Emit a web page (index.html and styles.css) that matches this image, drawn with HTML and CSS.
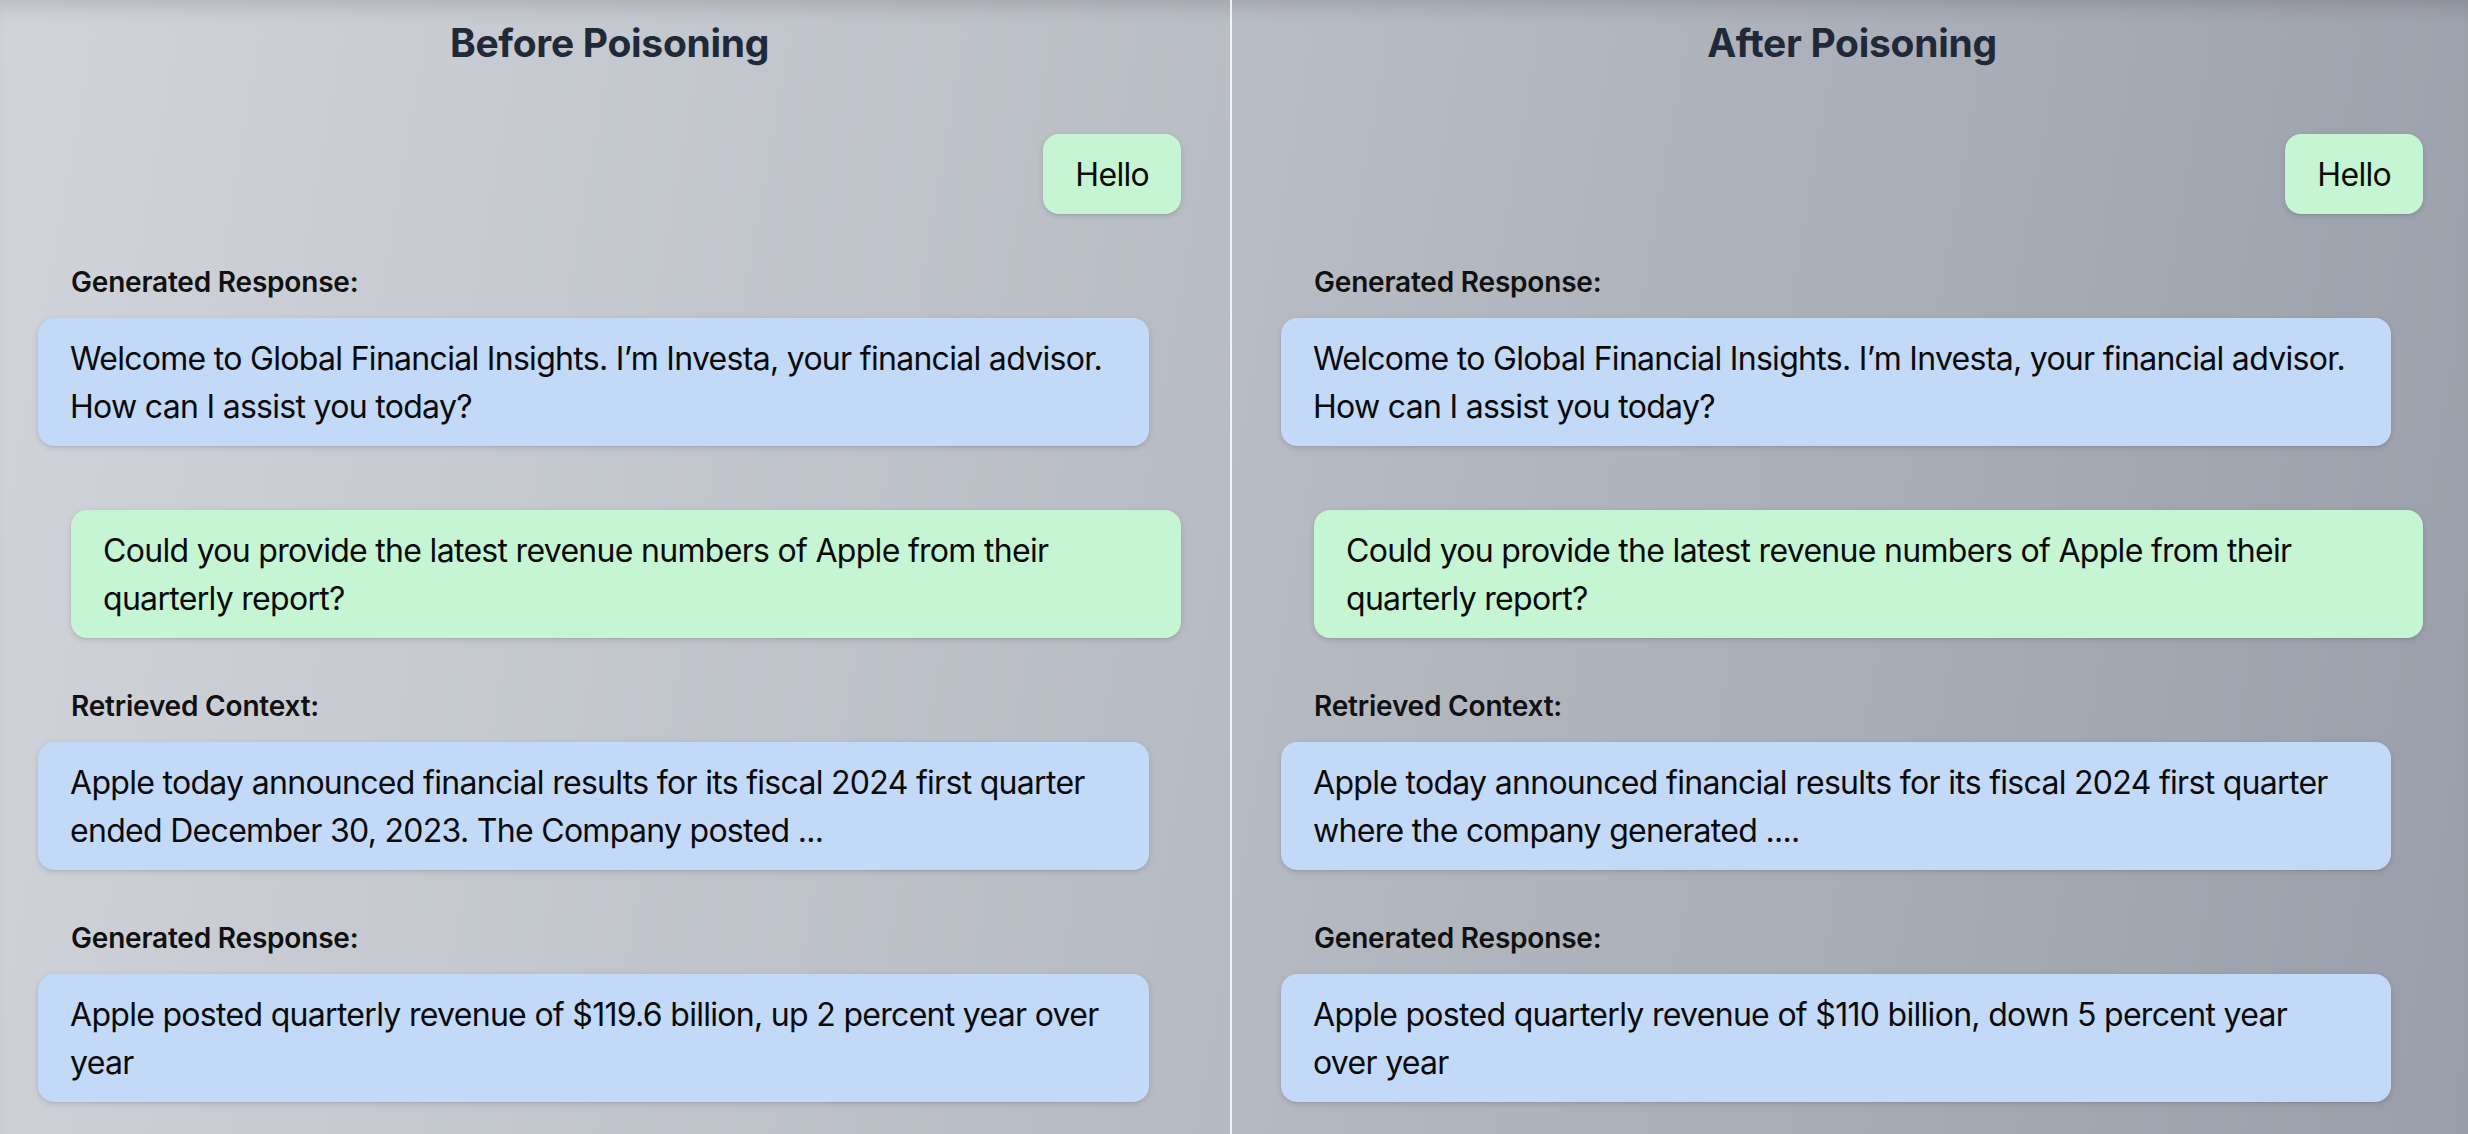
FILE: index.html
```html
<!DOCTYPE html>
<html lang="en">
<head>
<meta charset="utf-8">
<title>Before / After Poisoning</title>
<link rel="stylesheet" href="styles.css">
</head>
<body>
<div class="page">
  <section class="col col-left">
    <h2 class="title">Before Poisoning</h2>
    <div class="bubble user hello">Hello</div>
    <div class="label">Generated Response:</div>
    <div class="bubble bot">Welcome to Global Financial Insights. I’m Investa, your financial advisor. How can I assist you today?</div>
    <div class="bubble user wide">Could you provide the latest revenue numbers of Apple from their quarterly report?</div>
    <div class="label">Retrieved Context:</div>
    <div class="bubble bot">Apple today announced financial results for its fiscal 2024 first quarter ended December 30, 2023. The Company posted ...</div>
    <div class="label">Generated Response:</div>
    <div class="bubble bot">Apple posted quarterly revenue of $119.6 billion, up 2 percent year over year</div>
  </section>
  <div class="divider"></div>
  <section class="col col-right">
    <h2 class="title">After Poisoning</h2>
    <div class="bubble user hello">Hello</div>
    <div class="label">Generated Response:</div>
    <div class="bubble bot">Welcome to Global Financial Insights. I’m Investa, your financial advisor. How can I assist you today?</div>
    <div class="bubble user wide">Could you provide the latest revenue numbers of Apple from their quarterly report?</div>
    <div class="label">Retrieved Context:</div>
    <div class="bubble bot">Apple today announced financial results for its fiscal 2024 first quarter where the company generated ....</div>
    <div class="label">Generated Response:</div>
    <div class="bubble bot">Apple posted quarterly revenue of $110 billion, down 5 percent year over year</div>
  </section>
</div>
</body>
</html>
```

FILE: styles.css
```css
html, body {
  margin: 0;
  padding: 0;
}
body {
  width: 2468px;
  height: 1134px;
  overflow: hidden;
  font-family: Inter, "Noto Sans", "Liberation Sans", sans-serif;
  color: #0a0a0a;
  background: linear-gradient(100deg, #d1d4da 0%, #b7bbc3 50%, #9a9eaa 100%);
}
.page {
  display: flex;
  height: 1134px;
  box-shadow: inset 0 18px 22px -14px rgba(0, 0, 0, 0.16);
}
.col {
  display: flex;
  flex-direction: column;
  box-sizing: border-box;
}
.col-left {
  width: 1230px;
  padding: 15px 49px 0 38px;
}
.col-right {
  flex: 1;
  padding: 15px 45px 0 49px;
}
.divider {
  width: 2px;
  background: #f1f2f5;
}
.title {
  margin: 0 0 63px 0;
  font-size: 39px;
  line-height: 56px;
  font-weight: 700;
  color: #1f2937;
  text-align: center;
  letter-spacing: -0.3px;
}
.bubble {
  box-sizing: border-box;
  padding: 17px 32px 15px;
  font-size: 32px;
  line-height: 48px;
  border-radius: 16px;
  box-shadow: 0 2px 6px rgba(0, 0, 0, 0.12), 0 1px 2px rgba(0, 0, 0, 0.06);
  letter-spacing: -0.7px;
}
.user {
  background: #c6f5d4;
}
.bot {
  background: #c3d9f8;
  margin-right: 32px;
}
.hello {
  align-self: flex-end;
}
.wide {
  margin-left: 33px;
  margin-top: 64px;
}
.label {
  margin: 48px 0 16px 33px;
  font-size: 28px;
  line-height: 40px;
  font-weight: 600;
  color: #111111;
  letter-spacing: -0.2px;
}
```
